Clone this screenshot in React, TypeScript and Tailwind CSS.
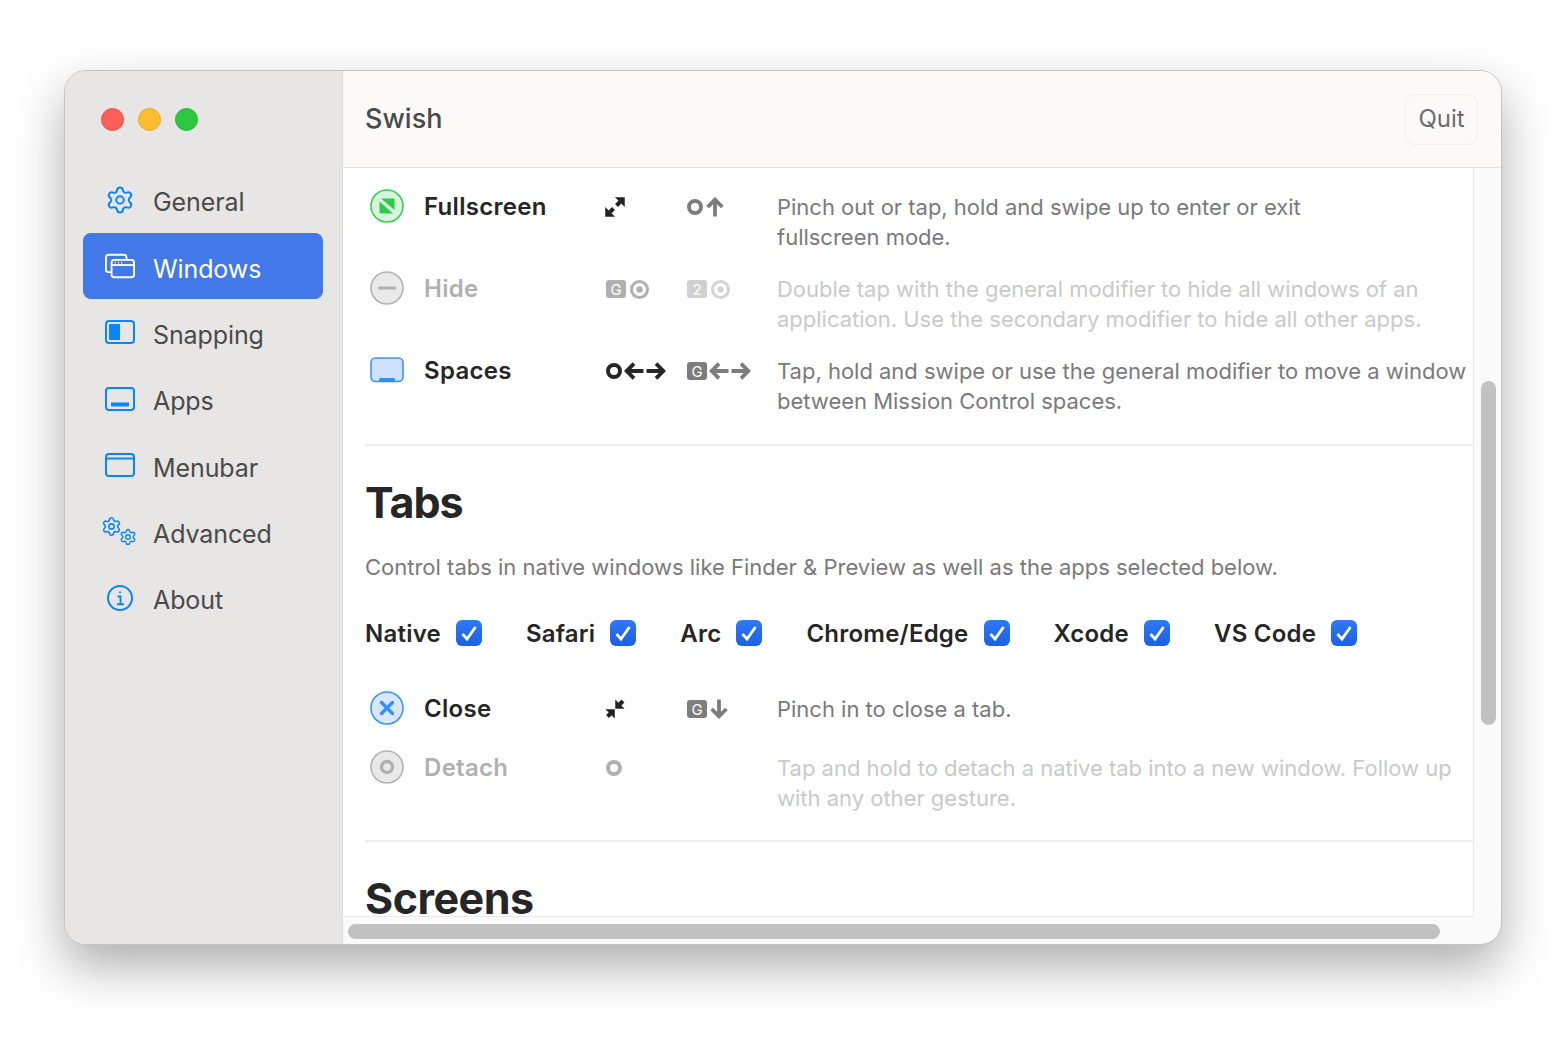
import type { ReactNode } from 'react';
import { Settings } from 'lucide-react';

const BLUE = '#0a84ff';

function WindowsIcon() {
    return (
        <svg width="32" height="26" viewBox="0 0 32 26" fill="none" stroke="currentColor" strokeWidth="2">
            <path d="M6 19.5H3.5A2.5 2.5 0 0 1 1 17V4a3 3 0 0 1 3-3h16a3 3 0 0 1 3 3v2" />
            <rect x="7" y="6.5" width="24" height="18.5" rx="3" />
            <path d="M7 12h24" />
            <path d="M10.5 9.3h1M14 9.3h1M17.5 9.3h1" strokeWidth="1.8" />
        </svg>
    );
}

function SnappingIcon() {
    return (
        <svg width="30" height="24" viewBox="0 0 30 24" fill="none">
            <rect x="1" y="1" width="28" height="22" rx="3" stroke={BLUE} strokeWidth="2" />
            <rect x="4" y="4" width="11" height="16" rx="0.5" fill={BLUE} />
        </svg>
    );
}

function AppsIcon() {
    return (
        <svg width="30" height="24" viewBox="0 0 30 24" fill="none">
            <rect x="1" y="1" width="28" height="22" rx="3" stroke={BLUE} strokeWidth="2" />
            <rect x="6" y="15.5" width="18" height="4" fill={BLUE} />
        </svg>
    );
}

function MenubarIcon() {
    return (
        <svg width="30" height="24" viewBox="0 0 30 24" fill="none" stroke={BLUE} strokeWidth="2">
            <rect x="1" y="1" width="28" height="22" rx="3" />
            <path d="M1 5.5h28" />
        </svg>
    );
}

function AdvancedIcon() {
    return (
        <div className="flex w-[36px] h-[30px] ml-[-3px] text-[#0a84ff]">
            <Settings size={21} strokeWidth={1.8} className="shrink-0" />
            <Settings size={18} strokeWidth={1.9} className="shrink-0 mt-[12px] ml-[-3px]" />
        </div>
    );
}

function AboutIcon() {
    return (
        <svg width="26" height="26" viewBox="0 0 26 26" fill="none" stroke={BLUE} strokeWidth="2">
            <circle cx="13" cy="13" r="12" />
            <path d="M10.5 11.5H13.5V19M10 19.2h7" strokeWidth="1.9" />
            <circle cx="13" cy="7.3" r="1.1" fill={BLUE} stroke="none" />
        </svg>
    );
}

const navItems: { label: string; icon: ReactNode; active?: boolean }[] = [
    { label: 'General', icon: <Settings size={30} strokeWidth={1.6} className="text-[#0a84ff]" /> },
    { label: 'Windows', icon: <WindowsIcon />, active: true },
    { label: 'Snapping', icon: <SnappingIcon /> },
    { label: 'Apps', icon: <AppsIcon /> },
    { label: 'Menubar', icon: <MenubarIcon /> },
    { label: 'Advanced', icon: <AdvancedIcon /> },
    { label: 'About', icon: <AboutIcon /> },
];

function Sidebar() {
    return (
        <aside className="w-[278px] shrink-0 bg-[#e8e6e5] border-r border-[#dcdad9] flex flex-col">
            <div className="flex gap-[14px] pl-[36px] pt-[37px] pb-[35.7px]">
                <span className="w-[23px] h-[23px] rounded-full bg-[#ff5f57] border border-[#e9534b]" />
                <span className="w-[23px] h-[23px] rounded-full bg-[#febc2e] border border-[#e6a928]" />
                <span className="w-[23px] h-[23px] rounded-full bg-[#2bc840] border border-[#28b53a]" />
            </div>
            <nav className="flex flex-col ml-[18px] mr-[19px]">
                {navItems.map((item) => (
                    <div
                        key={item.label}
                        className={`h-[66.3px] flex items-center rounded-lg pl-[22px] gap-[18px] ${item.active ? 'bg-[#4278e8] text-white' : 'text-[#4a4a4a]'}`}
                    >
                        <span className="w-[30px] flex justify-center shrink-0">{item.icon}</span>
                        <span className="text-[25px] tracking-[-0.1px] leading-none mt-[6px]">{item.label}</span>
                    </div>
                ))}
            </nav>
        </aside>
    );
}

// little gesture marks
function Ring({ color, size = 16, width = 4 }: { color: string; size?: number; width?: number }) {
    return (
        <svg width={size} height={size} viewBox="0 0 16 16" fill="none">
            <circle cx="8" cy="8" r={8 - width / 2} stroke={color} strokeWidth={width} />
        </svg>
    );
}

function Target({ color }: { color: string }) {
    return (
        <svg width="19" height="19" viewBox="0 0 19 19" fill="none" className="ml-[2px]">
            <circle cx="9.5" cy="9.5" r="8" stroke={color} strokeWidth="3" />
            <circle cx="9.5" cy="9.5" r="3.2" fill={color} />
        </svg>
    );
}

function Arrow({ dir, color }: { dir: 'up' | 'down' | 'left' | 'right'; color: string }) {
    const rotate = { up: 'rotate-0', down: 'rotate-180', left: '-rotate-90', right: 'rotate-90' }[dir];
    return (
        <svg width="20" height="20" viewBox="0 0 19 19" fill="none" stroke={color} strokeWidth="3.6" className={rotate}>
            <path d="M9.5 18.5V3M2.5 9.5l7-7 7 7" />
        </svg>
    );
}

function KeyCap({ label, color }: { label: string; color: string }) {
    return (
        <span className={`w-[20px] h-[18px] rounded-[3px] flex items-center justify-center text-white text-[15px] leading-none ${color}`}>
            {label}
        </span>
    );
}

function Expand() {
    return (
        <svg width="20" height="20" viewBox="0 0 20 20" fill="#222" stroke="#222" className="ml-[-1px]">
            <path d="M10.5 0.5H19.5V9.5Z" strokeWidth="0.5" />
            <path d="M0.5 19.5V10.5L9.5 19.5Z" strokeWidth="0.5" />
            <path d="M15 5L11.5 8.5M5 15L8.5 11.5" strokeWidth="4" />
        </svg>
    );
}

function Collapse() {
    return (
        <svg width="20" height="20" viewBox="0 0 20 20" fill="#222" stroke="#222" className="ml-[-1px]">
            <path d="M10.5 1V9.5H19Z" strokeWidth="0.5" />
            <path d="M9.5 19V10.5H1Z" strokeWidth="0.5" />
            <path d="M14 6L18 2M6 14L2.5 17.5" strokeWidth="4" />
        </svg>
    );
}

function CircleIcon({ stroke, fill, children }: { stroke: string; fill: string; children: ReactNode }) {
    return (
        <svg width="34" height="34" viewBox="0 0 34 34" fill="none">
            <circle cx="17" cy="17" r="16" fill={fill} stroke={stroke} strokeWidth="1.6" />
            {children}
        </svg>
    );
}

function SpacesIcon() {
    return (
        <svg width="34" height="26" viewBox="0 0 34 26" fill="none">
            <rect x="1" y="1" width="32" height="23.5" rx="4.5" fill="#cfe0fb" stroke="#3a94ff" strokeWidth="1.6" />
            <path d="M9 25V22.5a1.5 1.5 0 0 1 1.5-1.5h13a1.5 1.5 0 0 1 1.5 1.5V25Z" fill="#2e8fff" />
        </svg>
    );
}

function Row({ icon, name, gesture, keys, desc, dim, rowClass }: { icon: ReactNode; name: string; gesture: ReactNode; keys?: ReactNode; desc: ReactNode; dim?: boolean; rowClass: string }) {
    return (
        <div className={`grid grid-cols-[59px_181px_82px_90px_1fr] ${rowClass}`}>
            <div className="pl-[5px] h-[34px] flex items-center">{icon}</div>
            <div className={`h-[36px] flex items-center text-[24px] font-semibold tracking-[0.3px] ${dim ? 'text-[#b0b0b0]' : 'text-[#262626]'}`}>{name}</div>
            <div className="h-[36px] flex items-center gap-[2px] pl-[1px]">{gesture}</div>
            <div className="h-[36px] flex items-center gap-[2px]">{keys}</div>
            <p className={`text-[22px] leading-[29.5px] pt-[4px] tracking-[-0.01px] whitespace-nowrap ${dim ? 'text-[#c9c9c9]' : 'text-[#7a7a7a]'}`}>{desc}</p>
        </div>
    );
}

function Check({ label }: { label: string }) {
    return (
        <div className="flex items-center gap-[15px]">
            <span className="text-[24px] font-semibold tracking-[0.22px] text-[#262626] leading-none">{label}</span>
            <span className="w-[26px] h-[26px] rounded-[6px] bg-gradient-to-b from-[#3079f0] to-[#1b60e6] flex items-center justify-center mt-[-3px]">
                <svg width="18" height="18" viewBox="0 0 18 18" fill="none" stroke="white" strokeWidth="2.8">
                    <path d="M2.5 10l4.5 5L15.5 3" />
                </svg>
            </span>
        </div>
    );
}

const GRAY = '#7d7d7d';
const DARK = '#262626';

export default function App() {
    return (
        <div className="w-[1560px] h-[1038px] bg-white pl-[64px] pt-[70px] font-['Inter',sans-serif] overflow-hidden">
            <div className="w-[1438px] h-[875px] rounded-[22px] overflow-hidden flex border border-[#c4c4c4] bg-[#fafafa] shadow-[0_22px_50px_rgba(0,0,0,0.32)]">
                <Sidebar />
                <main className="flex-1 min-w-0 flex flex-col">
                    <header className="h-[97px] shrink-0 bg-[#fbfaf9] border-b border-[#e2e2e2] flex items-center justify-between pl-[22px] pr-[23px]">
                        <h1 className="text-[27px] font-medium text-[#4a4a4a]">Swish</h1>
                        <button className="w-[73px] h-[51px] rounded-[10px] border border-[#efeeed] text-[24px] text-[#6b6b6b]">Quit</button>
                    </header>
                    <div className="flex-1 min-h-0 flex">
                        <div className="flex-1 min-w-0 flex flex-col">
                            <div className="h-[749px] bg-white border-r border-b border-[#e8e8e8] overflow-hidden pl-[22px] pt-[21px]">
                                <Row
                                    rowClass="h-[82px]"
                                    icon={
                                        <CircleIcon stroke="#34cf50" fill="#d6f5dc">
                                            <path d="M11 9.5h12.5a1 1 0 0 1 1 1V21Z" fill="#2ec94a" />
                                            <path d="M9.5 12.5V23.5a1 1 0 0 0 1 1H23Z" fill="#2ec94a" />
                                        </CircleIcon>
                                    }
                                    name="Fullscreen"
                                    gesture={<Expand />}
                                    keys={<><Ring color={GRAY} /><Arrow dir="up" color={GRAY} /></>}
                                    desc={<>Pinch out or tap, hold and swipe up to enter or exit<br />fullscreen mode.</>}
                                />
                                <Row
                                    dim
                                    rowClass="h-[82px]"
                                    icon={
                                        <CircleIcon stroke="#b3b3b3" fill="#e9e9e9">
                                            <path d="M9.5 17h15" stroke="#b0b0b0" strokeWidth="3.2" strokeLinecap="round" />
                                        </CircleIcon>
                                    }
                                    name="Hide"
                                    gesture={<><KeyCap label="G" color="bg-[#b0b0b0]" /><Target color="#b0b0b0" /></>}
                                    keys={<><KeyCap label="2" color="bg-[#d0d0d0]" /><Target color="#d4d4d4" /></>}
                                    desc={<>Double tap with the general modifier to hide all windows of an<br />application. Use the secondary modifier to hide all other apps.</>}
                                />
                                <Row
                                    rowClass="h-[93px] border-b-2 border-[#eeeeee]"
                                    icon={<SpacesIcon />}
                                    name="Spaces"
                                    gesture={<><Ring color={DARK} /><Arrow dir="left" color={DARK} /><Arrow dir="right" color={DARK} /></>}
                                    keys={<><KeyCap label="G" color="bg-[#7d7d7d]" /><Arrow dir="left" color={GRAY} /><Arrow dir="right" color={GRAY} /></>}
                                    desc={<>Tap, hold and swipe or use the general modifier to move a window<br />between Mission Control spaces.</>}
                                />
                                <h2 className="text-[43px] font-bold text-[#262626] leading-none mt-[35px] tracking-[-1px]">Tabs</h2>
                                <p className="text-[22px] leading-[30px] text-[#7a7a7a] mt-[28px]">Control tabs in native windows like Finder &amp; Preview as well as the apps selected below.</p>
                                <div className="flex gap-[44px] mt-[34px] h-[36px] items-center">
                                    {['Native', 'Safari', 'Arc', 'Chrome/Edge', 'Xcode', 'VS Code'].map((tab) => (
                                        <Check key={tab} label={tab} />
                                    ))}
                                </div>
                                <Row
                                    rowClass="h-[59px] mt-[39px]"
                                    icon={
                                        <CircleIcon stroke="#3a94ff" fill="#d8e7fd">
                                            <path d="M11.5 11.5l11 11M22.5 11.5l-11 11" stroke="#2e8fff" strokeWidth="3.2" strokeLinecap="round" />
                                        </CircleIcon>
                                    }
                                    name="Close"
                                    gesture={<Collapse />}
                                    keys={<><KeyCap label="G" color="bg-[#7d7d7d]" /><Arrow dir="down" color={GRAY} /></>}
                                    desc="Pinch in to close a tab."
                                />
                                <Row
                                    dim
                                    rowClass="h-[92px] border-b-2 border-[#eeeeee]"
                                    icon={
                                        <CircleIcon stroke="#b3b3b3" fill="#e9e9e9">
                                            <circle cx="17" cy="17" r="5.5" stroke="#b0b0b0" strokeWidth="3.4" />
                                        </CircleIcon>
                                    }
                                    name="Detach"
                                    gesture={<Ring color="#b0b0b0" />}
                                    desc={<>Tap and hold to detach a native tab into a new window. Follow up<br />with any other gesture.</>}
                                />
                                <h2 className="text-[43px] font-bold text-[#262626] leading-none mt-[35px] tracking-[-0.5px]">Screens</h2>
                            </div>
                            <div className="flex-1 pl-[5px] pt-[7px]">
                                <div className="w-[1092px] h-[15px] rounded-full bg-[#c1c1c1]" />
                            </div>
                        </div>
                        <div className="w-[27px] shrink-0 pl-[7px] pt-[213px]">
                            <div className="w-[15px] h-[344px] rounded-full bg-[#c1c1c1]" />
                        </div>
                    </div>
                </main>
            </div>
        </div>
    );
}
